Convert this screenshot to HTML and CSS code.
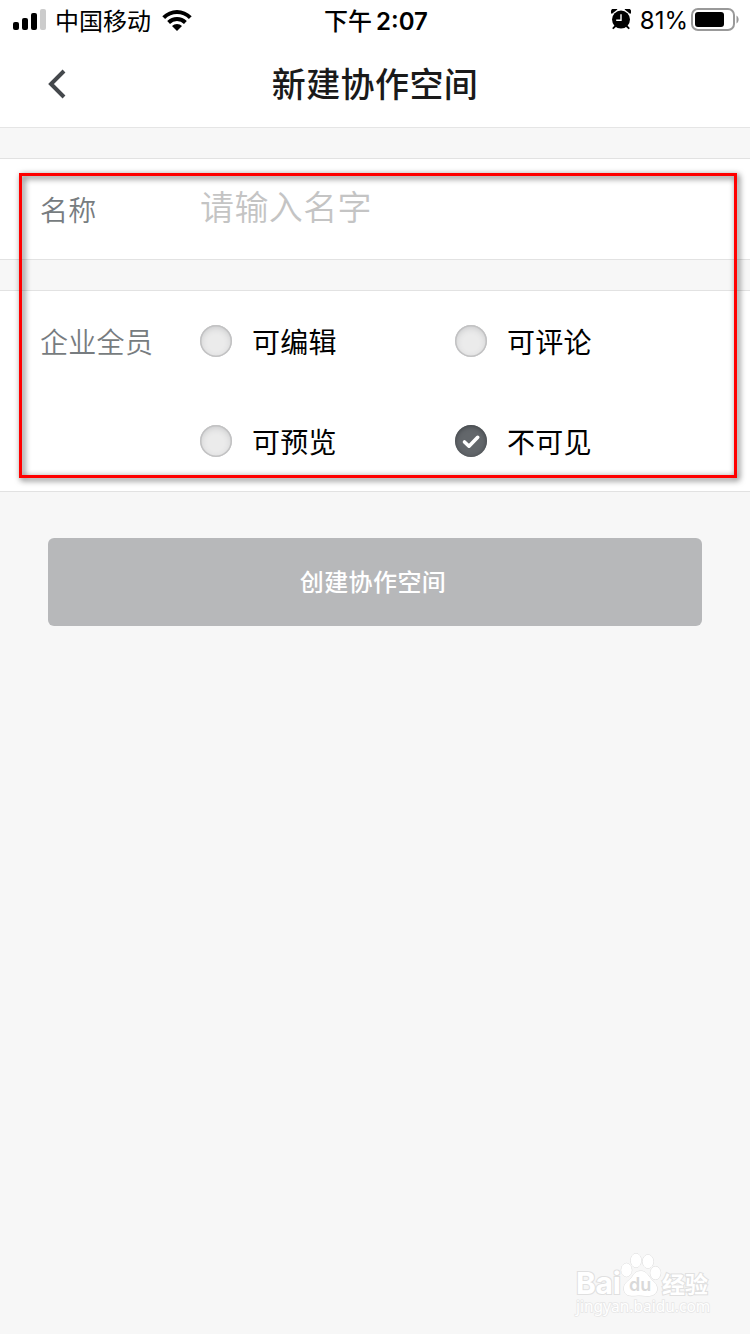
FILE: index.html
```html
<!DOCTYPE html>
<html lang="zh-CN">
<head>
    <meta charset="UTF-8">
    <meta name="viewport" content="width=device-width, initial-scale=1.0">
    <title>新建协作空间</title>
    <link rel="stylesheet" href="styles.css">
</head>
<body>
    <div class="status-bar">
        <div class="status-left">
            <svg class="signal" width="34" height="22" viewBox="0 0 34 22">
                <rect x="0" y="13" width="6" height="8" rx="2"/>
                <rect x="9" y="9" width="6" height="12" rx="2"/>
                <rect x="18" y="4" width="6" height="17" rx="2"/>
                <rect x="27" y="0" width="6" height="21" rx="2" fill="#ccc"/>
            </svg>
            <span class="carrier">中国移动</span>
            <svg class="wifi" width="30" height="22" viewBox="0 0 30 22">
                <path d="M0.3 7.2 A20.8 20.8 0 0 1 29.7 7.2 L26.9 10 A16.9 16.9 0 0 0 3.1 10 Z"/>
                <path d="M5.2 12.1 A13.9 13.9 0 0 1 24.8 12.1 L22 14.9 A9.9 9.9 0 0 0 8 14.9 Z"/>
                <path d="M10 17 A7 7 0 0 1 20 17 L15 22 Z"/>
            </svg>
        </div>
        <div class="time"><span class="noon">下午</span>2:07</div>
        <div class="status-right">
            <svg class="alarm" width="20" height="21" viewBox="0 0 20 21">
                <circle cx="10" cy="10.6" r="9"/>
                <path d="M0.7 5 A3.4 3.4 0 0 1 6.4 0.5 Z"/>
                <path d="M19.3 5 A3.4 3.4 0 0 0 13.6 0.5 Z"/>
                <path d="M4.5 17 L2.3 19.2 M15.5 17 L17.7 19.2" stroke="#000" stroke-width="1.8" stroke-linecap="round"/>
                <path d="M10 5.3 V11.2 H5.2" fill="none" stroke="#fff" stroke-width="1.4"/>
            </svg>
            <span class="percent">81%</span>
            <svg class="battery" width="48" height="24" viewBox="0 0 48 24">
                <rect x="1" y="1" width="42" height="21" rx="6" fill="none" stroke="#999" stroke-width="2"/>
                <rect x="4" y="4" width="29" height="15" rx="3"/>
                <path d="M45.5 7.5 C48.3 9 48.3 14 45.5 15.5 Z" fill="#999"/>
            </svg>
        </div>
    </div>

    <div class="header">
        <svg class="back" width="20" height="30" viewBox="0 0 20 30">
            <path d="M17 2 L4 15 L17 28" fill="none" stroke="#44484c" stroke-width="4"/>
        </svg>
        <h1>新建协作空间</h1>
    </div>

    <div class="form">
        <div class="panel name-panel">
            <label class="label" for="name">名称</label>
            <input class="name-input" type="text" id="name" placeholder="请输入名字">
        </div>

        <div class="panel member-panel">
            <div class="label">企业全员</div>
            <div class="options">
                <div class="option"><span class="radio"></span><span class="text">可编辑</span></div>
                <div class="option"><span class="radio"></span><span class="text">可评论</span></div>
                <div class="option"><span class="radio"></span><span class="text">可预览</span></div>
                <div class="option">
                    <span class="radio checked">
                        <svg width="32" height="32" viewBox="0 0 32 32">
                            <path d="M9.5 17 L14 21.2 L22.7 12.3" fill="none" stroke="#fff" stroke-width="3.6" stroke-linecap="round" stroke-linejoin="round"/>
                        </svg>
                    </span>
                    <span class="text">不可见</span>
                </div>
            </div>
        </div>
        <div class="highlight"></div>
    </div>

    <button class="create">创建协作空间</button>

    <div class="watermark">
        <svg width="60" height="50" viewBox="0 0 60 50">
            <g fill="#fff" stroke="#dcdcdc" stroke-width="1">
                <ellipse cx="16.5" cy="20" rx="5.3" ry="6.7"/>
                <ellipse cx="26" cy="10.5" rx="5.2" ry="7"/>
                <ellipse cx="38" cy="11.5" rx="5.4" ry="6.7"/>
                <ellipse cx="45.5" cy="23" rx="5.2" ry="6.5"/>
                <path d="M31 21 C37 21 38.5 27 43 31 C50 37 48 46 38 46 C34 46 32 45.5 28 45.5 C23 46 15 47 14 40 C13 33 19 31 22 27 C24 24 26 21 31 21 Z"/>
            </g>
        </svg>
        <div class="brand">
            <span class="bai">Bai</span>
            <span class="du">du</span>
            <span class="exp">经验</span>
        </div>
        <div class="site">jingyan.baidu.com</div>
    </div>
</body>
</html>
```
FILE: styles.css
```css
* {
    box-sizing: border-box;
}

body {
    position: relative;
    margin: 0;
    height: 1334px;
    overflow: hidden;
    background: #f7f7f7;
    color: #000;
    font-family: "Noto Sans CJK SC", sans-serif;
}

.status-bar {
    display: grid;
    grid-template-columns: 1fr auto 1fr;
    align-items: center;
    height: 40px;
    padding: 0 11px 0 13px;
    background: #fff;
    font-size: 24px;
    line-height: 40px;
}

.status-left,
.status-right {
    display: flex;
    align-items: center;
}

.status-right {
    justify-content: flex-end;
}

.carrier {
    margin: 0 11px 0 8px;
    padding-bottom: 1px;
    line-height: 39px;
}

.time {
    padding-top: 3px;
    font-family: Inter, "Noto Sans CJK SC", sans-serif;
    font-weight: 600;
    line-height: 37px;
}

.noon {
    margin-right: 4px;
    font-weight: 500;
}

.alarm {
    margin-bottom: 2px;
}

.percent {
    margin: 0 3px 0 9px;
    padding-top: 2px;
    font-family: Inter, sans-serif;
    line-height: 38px;
}

.header {
    display: grid;
    grid-template-columns: 48px 1fr 48px;
    align-items: center;
    height: 88px;
    padding: 0 47px;
    background: #fff;
    border-bottom: 1px solid #e5e5e5;
}

h1 {
    margin: 0;
    height: 87px;
    color: #1a1a1a;
    font-size: 34px;
    font-weight: 500;
    letter-spacing: 0.4px;
    line-height: 85px;
    text-align: center;
}

.form {
    position: relative;
    display: flex;
    flex-direction: column;
    gap: 30px;
    padding-top: 30px;
}

.panel {
    display: flex;
    padding-left: 40px;
    background: #fff;
    border-top: 1px solid #e2e2e2;
    border-bottom: 1px solid #e2e2e2;
}

.name-panel {
    height: 102px;
}

.member-panel {
    height: 202px;
}

.label {
    width: 160px;
    color: #777c80;
    font-size: 28px;
    font-weight: 350;
    letter-spacing: 0.3px;
    line-height: 100px;
}

.name-input {
    width: 500px;
    height: 92px;
    padding: 0;
    border: none;
    outline: none;
    background: none;
    font-family: inherit;
    font-size: 34px;
    font-weight: 350;
    letter-spacing: 0.4px;
}

.name-input::placeholder {
    color: #c4c4c4;
}

.options {
    display: grid;
    grid-template-columns: 255px 255px;
    grid-auto-rows: 100px;
}

.option {
    display: flex;
    align-items: center;
    font-size: 28px;
    letter-spacing: 0.3px;
}

.text {
    padding-bottom: 1px;
}

.radio {
    width: 32px;
    height: 32px;
    margin-right: 20px;
    border-radius: 50%;
    background: #ebebeb;
    box-shadow: inset 0 0 0 1.5px #c2c2c3, inset 0 2px 7px #c2c3c5;
}

.radio.checked {
    background: #63676b;
    box-shadow: inset 0 1px 5px #3d4145;
}

.radio svg {
    display: block;
}

.highlight {
    position: absolute;
    top: 45px;
    left: 19px;
    width: 718px;
    height: 305px;
    border: 3px solid #f00;
    filter: drop-shadow(2px 2px 3px rgba(0, 0, 0, 0.7));
    pointer-events: none;
}

.create {
    display: block;
    width: 654px;
    height: 88px;
    margin: 46px auto 0;
    padding: 0 4px 4px 0;
    border: none;
    border-radius: 6px;
    background: #b7b8ba;
    color: #fff;
    font-family: inherit;
    font-size: 24px;
    font-weight: 500;
    letter-spacing: 0.4px;
}

/* logo over the page corner */
.watermark {
    position: absolute;
    right: 25px;
    bottom: 14px;
    width: 150px;
    height: 70px;
    color: #fff;
    -webkit-text-stroke: 2px #e0e0e0;
    paint-order: stroke fill;
}

.watermark svg {
    position: absolute;
    top: 0;
    left: 35px;
}

.brand {
    position: relative;
    display: flex;
    height: 46px;
    padding-top: 21px;
    line-height: 25px;
}

.bai {
    width: 54px;
    padding-left: 1px;
    font-family: Inter, sans-serif;
    font-size: 30px;
    font-weight: 700;
    letter-spacing: -0.3px;
}

.du {
    width: 33px;
    color: #d9d9d9;
    font-family: Inter, sans-serif;
    font-size: 18px;
    font-weight: 600;
    line-height: 28px;
    -webkit-text-stroke: 0;
}

.exp {
    font-size: 23px;
    font-weight: 700;
    line-height: 25px;
}

.site {
    margin-top: 2px;
    padding-left: 1px;
    font-family: "Noto Sans", sans-serif;
    font-size: 15.5px;
    line-height: 16px;
    -webkit-text-stroke: 1.5px #e6e6e6;
}
```
